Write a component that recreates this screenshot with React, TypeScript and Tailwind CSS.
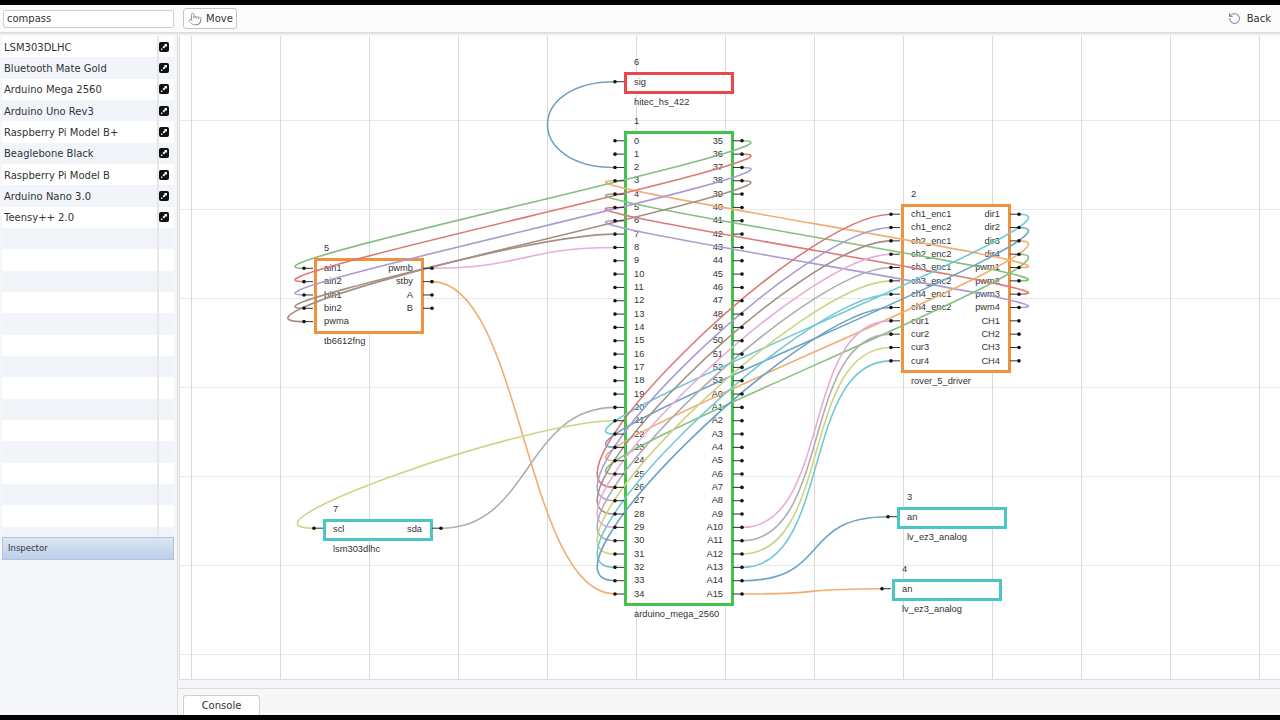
import { Pointer, RotateCcw } from "lucide-react";

const sans = "font-['Liberation_Sans',Arial,sans-serif]";
const ui = "font-['DejaVu_Sans',sans-serif]";

const parts = [
  "LSM303DLHC",
  "Bluetooth Mate Gold",
  "Arduino Mega 2560",
  "Arduino Uno Rev3",
  "Raspberry Pi Model B+",
  "Beaglebone Black",
  "Raspberry Pi Model B",
  "Arduino Nano 3.0",
  "Teensy++ 2.0",
];

const megaLeft = Array.from({ length: 35 }, (_, i) => String(i));
const megaRight = [
  ...Array.from({ length: 19 }, (_, i) => String(35 + i)),
  ...Array.from({ length: 16 }, (_, i) => "A" + i),
];
const roverLeft = [
  "ch1_enc1", "ch1_enc2", "ch2_enc1", "ch2_enc2", "ch3_enc1", "ch3_enc2",
  "ch4_enc1", "ch4_enc2", "cur1", "cur2", "cur3", "cur4",
];
const roverRight = [
  "dir1", "dir2", "dir3", "dir4", "pwm1", "pwm2", "pwm3", "pwm4",
  "CH1", "CH2", "CH3", "CH4",
];
const tbLeft = ["ain1", "ain2", "bin1", "bin2", "pwma"];
const tbRight = ["pwmb", "stby", "A", "B"];

// pin rows
const ROW = 13.33;
const megaL = (n: number) => ({ x: 615, y: 140.8 + ROW * n, d: -1 });
const megaR = (n: number) => ({ x: 742, y: 140.8 + ROW * n, d: 1 });
const roverL = (n: number) => ({ x: 891, y: 214.2 + ROW * n, d: -1 });
const roverR = (n: number) => ({ x: 1019, y: 214.2 + ROW * n, d: 1 });
const tbL = (n: number) => ({ x: 304, y: 268.3 + ROW * n, d: -1 });
const tbR = (n: number) => ({ x: 432, y: 268.3 + ROW * n, d: 1 });
const sig = { x: 615, y: 81.7, d: -1 };
const scl = { x: 314, y: 528.2, d: -1 };
const sda = { x: 441, y: 528.2, d: 1 };
const an3 = { x: 888, y: 516.7, d: -1 };
const an4 = { x: 882, y: 588.7, d: -1 };

const green = "#85bf80";
const red = "#da7a77";
const purple = "#ab9dd3";
const brown = "#a58f85";
const pink = "#e7acd9";
const gray = "#afafaf";
const yellow = "#d0d385";
const teal = "#72c9d3";
const blue = "#6fa3c3";
const orange = "#f2ad70";

type Pin = { x: number; y: number; d: number };

const wires: [Pin, Pin, string][] = [
  [sig, megaL(2), blue],
  [megaL(3), roverR(4), orange],
  [megaL(4), roverR(5), green],
  [megaL(5), roverR(6), red],
  [megaL(6), roverR(7), purple],
  [tbL(0), megaR(0), green],
  [tbL(1), megaR(1), red],
  [tbL(2), megaR(2), purple],
  [tbL(3), megaR(3), brown],
  [tbL(4), megaL(7), brown],
  [tbR(0), megaL(8), pink],
  [tbR(1), megaL(34), orange],
  [sda, megaL(20), gray],
  [scl, megaL(21), yellow],
  [megaL(22), roverR(0), teal],
  [megaL(23), roverR(1), blue],
  [megaL(24), roverR(2), orange],
  [megaL(25), roverR(3), green],
  [megaL(26), roverL(0), red],
  [megaL(27), roverL(1), purple],
  [megaL(28), roverL(2), brown],
  [megaL(29), roverL(3), pink],
  [megaL(30), roverL(4), gray],
  [megaL(31), roverL(5), yellow],
  [megaL(32), roverL(6), teal],
  [megaL(33), roverL(7), blue],
  [megaR(29), roverL(8), pink],
  [megaR(30), roverL(9), gray],
  [megaR(31), roverL(10), yellow],
  [megaR(32), roverL(11), teal],
  [megaR(33), an3, blue],
  [megaR(34), an4, orange],
];

const pins: Pin[] = [
  sig, scl, sda, an3, an4,
  ...megaLeft.map((_, i) => megaL(i)),
  ...megaRight.map((_, i) => megaR(i)),
  ...roverLeft.map((_, i) => roverL(i)),
  ...roverRight.map((_, i) => roverR(i)),
  ...tbLeft.map((_, i) => tbL(i)),
  ...tbRight.map((_, i) => tbR(i)),
];

const wirePath = (a: Pin, b: Pin) => {
  const c = 90;
  return `M${a.x} ${a.y}C${a.x + a.d * c} ${a.y} ${b.x + b.d * c} ${b.y} ${b.x} ${b.y}`;
};

function Board({
  className,
  num,
  name,
  left,
  right = [],
}: {
  className: string;
  num: string;
  name: string;
  left: string[];
  right?: string[];
}) {
  return (
    <div className={`absolute w-[110px] border-[3px] bg-white pb-[2px] pt-[1px] text-[9.3px] leading-[13.33px] text-[#333] ${sans} ${className}`}>
      <span className="absolute left-[7px] top-[-19px]">{num}</span>
      <div className="flex justify-between pl-[7px] pr-[8px]">
        <div>
          {left.map((l) => (
            <div key={l}>{l}</div>
          ))}
        </div>
        <div className="text-right">
          {right.map((r) => (
            <div key={r}>{r}</div>
          ))}
        </div>
      </div>
      <span className="absolute left-[7px] bottom-[-18px] whitespace-nowrap">{name}</span>
    </div>
  );
}

function OpenIcon() {
  return (
    <svg width="10" height="10" viewBox="0 0 10 10">
      <rect width="10" height="10" rx="2" fill="#111" />
      <path d="M5 2h3v3L7 4 5 6.5 3.5 5 6 3z" fill="#fff" />
      <path d="M2 6.5h1.2L3.5 8H2z" fill="#fff" />
    </svg>
  );
}

export default function App() {
  return (
    <div className={`flex h-[720px] w-[1280px] flex-col overflow-hidden bg-[#f4f6f9] ${ui}`}>
      <div className="h-[5px] shrink-0 bg-black" />

      {/* Toolbar */}
      <div className="flex h-[29px] shrink-0 items-center border-b-2 border-[#dfdfdf] bg-[#fbfbfb] pl-[3px] pr-[9px] text-[10px] text-[#333]">
        <div className="flex h-[18px] w-[171px] items-center rounded-[2px] border border-[#cfcfcf] bg-white pl-[3px] text-[10px] text-[#333]">
          compass
        </div>
        <button className="ml-[9px] flex h-[21px] w-[54px] items-center rounded-[3px] border border-[#c4c4c4] bg-white pl-[4px]">
          <Pointer size={14} strokeWidth={1.2} className="text-[#777]" />
          <span className="ml-[4px]">Move</span>
        </button>
        <div className="ml-auto flex items-center">
          <RotateCcw size={13} strokeWidth={1.8} className="text-[#777]" />
          <span className="ml-[6px]">Back</span>
        </div>
      </div>

      <div className="flex min-h-0 flex-1">
        {/* Sidebar */}
        <aside className="flex w-[178px] shrink-0 flex-col border-r border-[#dcdcdc] pl-[2px] pr-[3px] pt-[2px] text-[10px] text-[#333]">
          <div className="h-[501px] shrink-0 overflow-hidden">
            {Array.from({ length: 24 }, (_, i) => (
              <div
                key={i}
                className={`flex h-[21.33px] items-center ${i % 2 === 0 ? "bg-white" : "bg-[#f1f4f9]"}`}
              >
                <span className="w-[155px] shrink-0 truncate pl-[2px] pt-[1px]">{parts[i]}</span>
                <span className="h-full w-[2px] shrink-0 bg-[#e8e8e8]" />
                {parts[i] && (
                  <span className="flex w-[10px]">
                    <OpenIcon />
                  </span>
                )}
              </div>
            ))}
          </div>
          <div className="flex h-[23px] shrink-0 items-center border border-[#b4c4dc] bg-gradient-to-b from-[#dbe5f3] to-[#bccfe9] pl-[5px] text-[8.5px] text-[#333]">
            Inspector
          </div>
        </aside>

        <div className="flex min-w-0 flex-1 flex-col">
          {/* Canvas */}
          <div className="relative ml-[1px] mt-[2px] h-[644px] w-[1101px] overflow-hidden border-b border-l border-[#dddddd] bg-white bg-[linear-gradient(to_right,#dadada_1px,transparent_1px),linear-gradient(to_bottom,#e8e8e8_1px,transparent_1px)] bg-[size:89px_89px] bg-[position:11px_-5px]">
            <Board className="left-[444px] top-[36px] border-[#e8484c]" num="6" name="hitec_hs_422" left={["sig"]} />
            <Board className="left-[444px] top-[94.5px] border-[#44c24f]" num="1" name="arduino_mega_2560" left={megaLeft} right={megaRight} />
            <Board className="left-[134px] top-[222px] border-[#f0923b]" num="5" name="tb6612fng" left={tbLeft} right={tbRight} />
            <Board className="left-[721px] top-[168px] border-[#f0923b]" num="2" name="rover_5_driver" left={roverLeft} right={roverRight} />
            <Board className="left-[717px] top-[470.5px] border-[#4cc6c4]" num="3" name="lv_ez3_analog" left={["an"]} />
            <Board className="left-[712px] top-[542.5px] border-[#4cc6c4]" num="4" name="lv_ez3_analog" left={["an"]} />
            <Board className="left-[143px] top-[482.5px] border-[#4cc6c4]" num="7" name="lsm303dlhc" left={["scl"]} right={["sda"]} />

            <svg className="pointer-events-none absolute left-0 top-0" width="1100" height="645" viewBox="180 36 1100 645" fill="none">
              {wires.map(([a, b, color], i) => (
                <path key={i} d={wirePath(a, b)} stroke={color} strokeWidth="1.6" />
              ))}
              {pins.map((p, i) => (
                <g key={i}>
                  <path d={`M${p.x} ${p.y}h${-p.d * 9}`} stroke="#333" strokeWidth="1" />
                  <circle cx={p.x} cy={p.y} r="1.8" fill="#111" />
                </g>
              ))}
            </svg>
          </div>

          {/* Console tab */}
          <div className="mt-[8px] flex-1 border-t border-[#dddddd] bg-[#f7f7f7] pl-[5px] pt-[6px]">
            <div className="flex h-[20px] w-[77px] items-center justify-center rounded-t-[3px] border border-b-0 border-[#cfcfcf] bg-white text-[10px] text-[#333]">
              Console
            </div>
          </div>
        </div>
      </div>

      <div className="h-[5px] shrink-0 bg-black" />
    </div>
  );
}
